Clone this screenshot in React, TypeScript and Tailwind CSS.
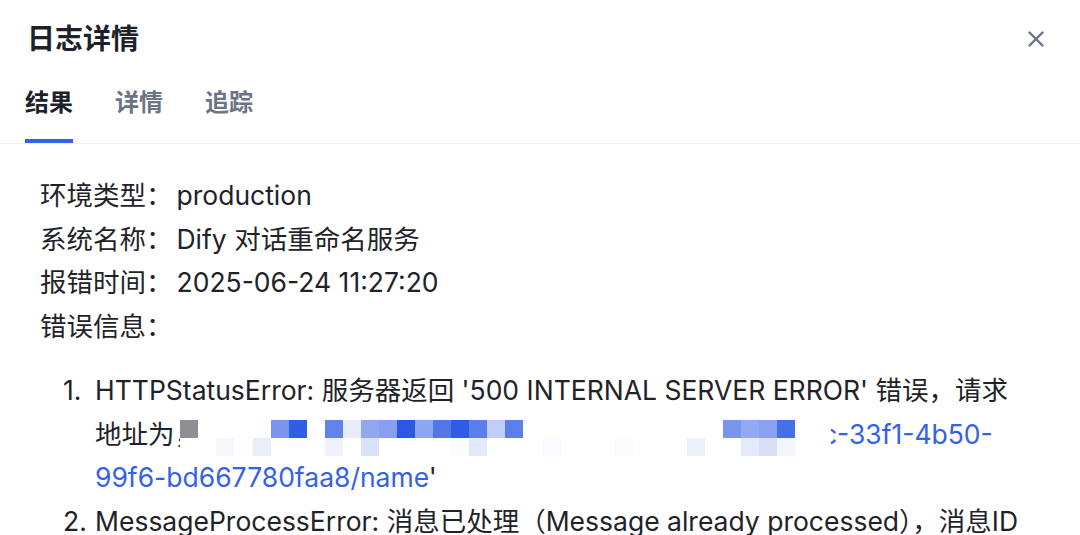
import React from "react";

const FONT = "Inter, 'Noto Sans CJK SC', sans-serif";

type Block = { x: number; y: number; c: string };

// pixelated (masked) part of the request url
const mosaic: Block[] = [
  { x: 0, y: 0, c: "#8e8f94" },
  { x: 91, y: 0, c: "#7a96ec" },
  { x: 109, y: 0, c: "#2f5de6" },
  { x: 145, y: 0, c: "#6283ea" },
  { x: 163, y: 0, c: "#e8edfb" },
  { x: 181, y: 0, c: "#91a8f0" },
  { x: 199, y: 0, c: "#889ff0" },
  { x: 217, y: 0, c: "#2a57e4" },
  { x: 235, y: 0, c: "#8ea5ef" },
  { x: 253, y: 0, c: "#5277e8" },
  { x: 271, y: 0, c: "#2f5ce5" },
  { x: 289, y: 0, c: "#5b7fea" },
  { x: 307, y: 0, c: "#c0cdf6" },
  { x: 325, y: 0, c: "#5b80ea" },
  { x: 543, y: 0, c: "#7995ec" },
  { x: 561, y: 0, c: "#93a9f0" },
  { x: 579, y: 0, c: "#8aa1ef" },
  { x: 597, y: 0, c: "#4571e7" },
  { x: 36, y: 18, c: "#f7f8fd" },
  { x: 73, y: 18, c: "#e9eefb" },
  { x: 145, y: 18, c: "#f0f3fd" },
  { x: 181, y: 18, c: "#dae2f9" },
  { x: 271, y: 18, c: "#fbfcfe" },
  { x: 289, y: 18, c: "#e3e9fa" },
  { x: 363, y: 18, c: "#fafbfe" },
  { x: 435, y: 18, c: "#fafbfe" },
  { x: 507, y: 18, c: "#edf1fc" },
  { x: 561, y: 18, c: "#e4e9fb" },
  { x: 579, y: 18, c: "#d7dff9" },
  { x: 597, y: 18, c: "#f4f6fd" },
];

function Mosaic() {
  return (
    <svg
      width="651"
      height="36"
      viewBox="0 0 651 36"
      className="inline-block ml-[-21px] align-[-12px]"
    >
      <rect x="0" y="0" width="651" height="36" fill="#ffffff" />
      {mosaic.map((b, i) => (
        <rect key={i} x={b.x} y={b.y} width="18" height="18" fill={b.c} />
      ))}
    </svg>
  );
}

function CloseIcon() {
  return (
    <svg width="24" height="24" viewBox="0 0 24 24" fill="none">
      <path
        d="M5.5 5.5L18.5 18.5M18.5 5.5L5.5 18.5"
        stroke="#6b7280"
        strokeWidth="2.4"
        strokeLinecap="round"
      />
    </svg>
  );
}

const tabs = ["结果", "详情", "追踪"];

const fields = [
  { label: "环境类型：", value: "production" },
  { label: "系统名称：", value: "Dify 对话重命名服务" },
  { label: "报错时间：", value: "2025-06-24 11:27:20" },
];

export default function App() {
  const active = 0;

  return (
    <div
      className="w-[1080px] h-[535px] overflow-hidden bg-white text-[#1f2329]"
      style={{ fontFamily: FONT }}
    >
      {/* Header */}
      <div className="h-[78px] flex items-center justify-between pl-[27px] pr-[32px]">
        <h1 className="text-[28px] font-bold leading-none text-[#1d2129]">日志详情</h1>
        <button className="flex items-center justify-center">
          <CloseIcon />
        </button>
      </div>

      {/* Tabs */}
      <div className="h-[66px] border-b border-[#eef0f3] flex gap-[42px] px-[25px]">
        {tabs.map((t, i) => (
          <div
            key={t}
            className={
              "h-[65px] pt-[13px] border-b-[4px] text-[24px] leading-[24px] font-semibold " +
              (i === active
                ? "border-[#3461e8] text-[#1d2129]"
                : "border-transparent text-[#6b7385]")
            }
          >
            {t}
          </div>
        ))}
      </div>

      {/* Result content */}
      <div className="pl-[40px] pt-[30px] text-[26.5px] leading-[43.5px]">
        {fields.map((f) => (
          <div key={f.label}>
            <span className="mr-[4px]">{f.label}</span>
            <span>{f.value}</span>
          </div>
        ))}
        <div>错误信息：</div>

        <div className="mt-[21px] ml-[23px] flex flex-col">
          <div className="flex">
            <span className="w-[32px] shrink-0">1.</span>
            <div className="whitespace-nowrap">
              HTTPStatusError: 服务器返回 '500 INTERNAL SERVER ERROR' 错误，请求
              <br />
              地址为，
              <Mosaic />
              <span className="text-[#3461e8]">
                <span className="inline-block w-[6px] overflow-hidden align-bottom">
                  <span className="inline-block ml-[-9px]">c</span>
                </span>
                -33f1-4b50-
              </span>
              <br />
              <span className="text-[#3461e8]">99f6-bd667780faa8/name</span>'
            </div>
          </div>
          <div className="flex">
            <span className="w-[32px] shrink-0">2.</span>
            <div className="whitespace-nowrap">
              MessageProcessError: 消息已处理（Message already processed），消息ID
            </div>
          </div>
        </div>
      </div>
    </div>
  );
}
